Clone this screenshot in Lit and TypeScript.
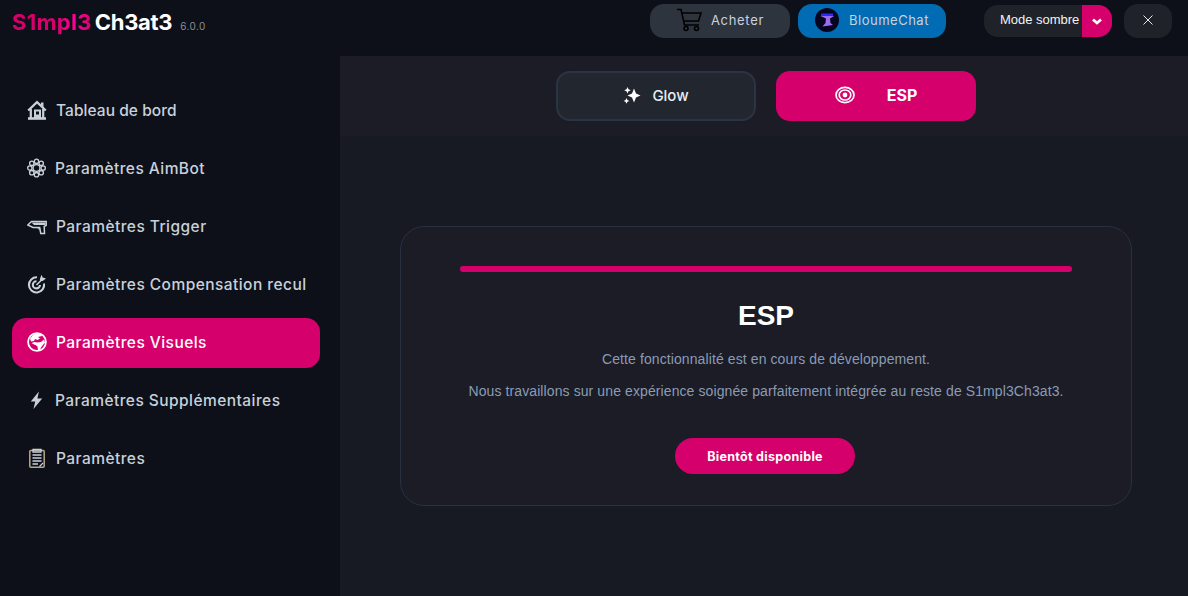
import { LitElement, html, css, svg } from 'lit';
import { customElement } from 'lit/decorators.js';

// eight petals around the hub of the AimBot icon
const petals = [0, 45, 90, 135, 180, 225, 270, 315].map((deg) => {
  const rad = (deg * Math.PI) / 180;
  return svg`<circle cx=${10 + 7 * Math.cos(rad)} cy=${10 + 7 * Math.sin(rad)} r="2.300"/>`;
});

const navItems = [
  {
    label: 'Tableau de bord',
    size: 20,
    tight: true,
    icon: svg`<path d="M1.200 10.500 10 2.200l8.800 8.300" fill="none" stroke="currentColor" stroke-width="2.300"/><path d="M14 5.500V2.500h2.500v5" fill="currentColor"/><path d="M3.800 9v9M16.200 9v9" stroke="currentColor" stroke-width="2.200"/><path d="M1 18.500h18" stroke="currentColor" stroke-width="2.600"/><path d="M7 9.500h7V18H7z" fill="currentColor"/><rect x="9" y="11.500" width="3" height="3" fill="#0d1018"/>`,
  },
  {
    label: 'Paramètres AimBot',
    size: 19,
    icon: svg`<g fill="none" stroke="currentColor" stroke-width="1.400"><circle cx="10" cy="10" r="3.600"/>${petals}</g>`,
  },
  {
    label: 'Paramètres Trigger',
    size: 20,
    icon: svg`<path d="M.8 9 4.500 5.500h14.700v3.800l-2 1.200 .3 7h-3.700l-1.200-6H6z" fill="none" stroke="currentColor" stroke-width="1.500"/><path d="M4.500 6.500h14V9H7z" fill="currentColor"/><path d="M10 11h3l.6 2.500h-2.600z" fill="currentColor" opacity=".6"/>`,
  },
  {
    label: 'Paramètres Compensation recul',
    size: 20,
    icon: svg`<g fill="none" stroke="currentColor" stroke-width="2.100"><path d="M17 9.500a7.600 7.600 0 1 1-7-6.200"/><path d="M13 11a3.600 3.600 0 1 1-3.500-3.800"/></g><path d="m9.500 11 5-5" stroke="currentColor" stroke-width="1.600"/><path d="M12.800 5.200 14.500.8l1.200 2.700 3.300 1-3.300 2.500h-2.200z" fill="currentColor"/>`,
  },
  {
    label: 'Paramètres Visuels',
    size: 20,
    active: true,
    icon: svg`<circle cx="10" cy="10" r="8.900" fill="none" stroke="currentColor" stroke-width="1.800"/><path d="M3 6.500 6.500 2.500l4-1.500 3.500 1 1 2-4 1 2 1.500-2.500 1.500-2.500-1-1 2-3 .5zM4.500 11l3-1 3 .5 3.500-.5 3-2.500 1 3-2.500 3-1.500 2-1 2.500-2 .5-.5-4-2-1.500-1.500-.5z" fill="currentColor"/>`,
  },
  {
    label: 'Paramètres Supplémentaires',
    size: 19,
    icon: svg`<path d="M12.500 1 4 11.500h4.700L6.800 19.500 16 8.500h-5z" fill="currentColor"/>`,
  },
  {
    label: 'Paramètres',
    size: 20,
    icon: svg`<rect x="2.800" y="2.500" width="14.400" height="16.700" rx="1" fill="none" stroke="#b9a68f" stroke-width="1.500"/><path d="M6 1.500h8v2.500H6zM5.500 7h9M5.500 10h9M5.500 13h9M5.500 16h5.500" stroke="currentColor" stroke-width="1.300" fill="none"/><path d="m12.500 18.500 3.500-3.500" stroke="currentColor" stroke-width="1.200"/>`,
  },
];

@customElement('app-root')
export class AppRoot extends LitElement {
  static styles = css`
    :host {
      display: grid;
      grid-template-columns: 340px 1fr;
      grid-template-rows: 56px 1fr;
      width: 1188px;
      height: 596px;
      overflow: hidden;
      background: #171a23;
      font-family: 'Inter', 'Liberation Sans', sans-serif;
      color: #fff;
    }

    .topbar {
      grid-column: 1 / 3;
      display: flex;
      align-items: flex-start;
      background: #0d1018;
      padding: 4px 16px 0 12px;
    }

    .logo {
      display: flex;
      align-items: baseline;
      gap: 3px;
      margin-top: 4px;
      font-size: 22px;
      font-weight: 700;
      line-height: 28px;
      letter-spacing: -0.3px;
    }

    .logo .pink {
      letter-spacing: 0.3px;
      background: linear-gradient(90deg, #d6006c 0%, #d6006c 55%, #ff0099 80%, #d6006c 100%);
      -webkit-background-clip: text;
      background-clip: text;
      color: transparent;
    }

    .version {
      margin-left: 5px;
      font-size: 10px;
      font-weight: 400;
      color: #8a8d94;
      letter-spacing: 0.4px;
    }

    .pill {
      display: flex;
      align-items: center;
      justify-content: center;
      gap: 9px;
      box-sizing: border-box;
      height: 34px;
      padding-bottom: 2px;
      border-radius: 14px;
      font-size: 13px;
      letter-spacing: 0.5px;
      color: #c9d1dc;
    }

    .buy {
      width: 140px;
      margin-left: auto;
      background: #2e343d;
      letter-spacing: 0.7px;
    }

    .chat {
      width: 148px;
      margin-left: 8px;
      background: #016cb3;
      gap: 10px;
    }

    .theme {
      display: flex;
      align-items: center;
      width: 128px;
      height: 32px;
      margin: 1px 0 0 38px;
      border-radius: 14px;
      overflow: hidden;
      background: #1f2229;
      font-family: 'Liberation Sans', sans-serif;
      font-size: 13px;
      letter-spacing: -0.02px;
      color: #f2f2f2;
    }

    .theme span {
      flex: 1;
      padding: 0 0 3px 16px;
      white-space: nowrap;
    }

    .theme i {
      display: flex;
      align-items: center;
      justify-content: center;
      width: 30px;
      height: 100%;
      background: #d6006c;
    }

    .close {
      display: flex;
      align-items: center;
      justify-content: center;
      box-sizing: border-box;
      width: 48px;
      height: 34px;
      margin-left: 12px;
      padding-bottom: 2px;
      border-radius: 14px;
      background: #1f2229;
    }

    .sidebar {
      display: flex;
      flex-direction: column;
      gap: 8px;
      padding: 30px 20px 0 12px;
      background: #0d1018;
    }

    .nav-item {
      display: flex;
      align-items: center;
      gap: 9px;
      box-sizing: border-box;
      height: 50px;
      padding: 0 0 2px 15px;
      border-radius: 14px;
      font-size: 15.500px;
      font-weight: 500;
      letter-spacing: 0.45px;
      color: #c8d0da;
      white-space: nowrap;
    }

    .nav-item.tight {
      letter-spacing: 0.05px;
    }

    .nav-item.active {
      background: #d6006c;
      color: #fff;
    }

    .content {
      display: flex;
      flex-direction: column;
    }

    .tabs {
      display: flex;
      justify-content: center;
      gap: 20px;
      height: 80px;
      padding: 15px 0 0 4px;
      box-sizing: border-box;
      background: #1b1c25;
    }

    .tab {
      display: flex;
      align-items: center;
      justify-content: center;
      box-sizing: border-box;
      width: 200px;
      height: 50px;
      padding-bottom: 2px;
      border-radius: 14px;
      font-size: 15px;
      font-weight: 500;
    }

    .tab.glow {
      gap: 11px;
      border: 2px solid #2a3444;
      background: #21262f;
      color: #e8edf4;
    }

    .tab.esp {
      gap: 32px;
      background: #d6006c;
      font-size: 16px;
      font-weight: 700;
    }

    .stage {
      padding: 90px 56px 0 60px;
    }

    .card {
      display: flex;
      flex-direction: column;
      align-items: center;
      box-sizing: border-box;
      height: 280px;
      padding: 39px 59px 0;
      border: 1px solid #2a3040;
      border-radius: 24px;
      background: #1b1c25;
      font-family: 'Liberation Sans', sans-serif;
    }

    .bar {
      align-self: stretch;
      height: 6px;
      border-radius: 3px;
      background: #d6006c;
    }

    h1 {
      margin: 27px 0 0;
      font-size: 28px;
      line-height: 34px;
      font-weight: 700;
    }

    p {
      margin: 16px 0 0;
      font-size: 14px;
      line-height: 16px;
      letter-spacing: 0.1px;
      color: #8a9bb5;
    }

    h1 + p {
      margin-top: 18px;
    }

    .soon {
      display: flex;
      align-items: center;
      justify-content: center;
      width: 180px;
      height: 36px;
      margin: 39px 2px 0 0;
      border-radius: 18px;
      background: #d6006c;
      font-family: 'Inter', 'Liberation Sans', sans-serif;
      font-size: 12.500px;
      font-weight: 700;
      letter-spacing: 0.3px;
    }
  `;

  render() {
    return html`
      <header class="topbar">
        <div class="logo">
          <span class="pink">S1mpl3</span><span>Ch3at3</span>
          <span class="version">6.0.0</span>
        </div>
        <div class="pill buy">
          <svg width="26" height="24" viewBox="0 0 26 24" fill="none" stroke="#000" stroke-width="1.600">
            <path d="M1 1.500h4l3.500 15.500H23" />
            <path d="M6 5h19l-2.500 8H8" />
            <circle cx="10" cy="20.500" r="2" />
            <circle cx="20.500" cy="20.500" r="2" />
          </svg>
          <span>Acheter</span>
        </div>
        <div class="pill chat">
          <svg width="24" height="24" viewBox="0 0 24 24">
            <circle cx="12" cy="12" r="12" fill="#05051f" />
            <path d="M6 5.500h12v2.500H6z" fill="#2a2cf0" />
            <path d="M5.500 8h13.500l-4 2.500.5 4.500 2.500 2-10.500 1.500 3-3.500.5-4.500z" fill="#9a6cf0" />
          </svg>
          <span>BloumeChat</span>
        </div>
        <div class="theme">
          <span>Mode sombre</span>
          <i>
            <svg width="10" height="7" viewBox="0 0 10 7" fill="none" stroke="#fff" stroke-width="2.800">
              <path d="M1 1.500 5 5l4-3.500" />
            </svg>
          </i>
        </div>
        <div class="close">
          <svg width="10" height="10" viewBox="0 0 10 10" stroke="#e8e8e8" stroke-width="1">
            <path d="M.5.500l9 9M9.500.500l-9 9" />
          </svg>
        </div>
      </header>

      <nav class="sidebar">
        ${navItems.map(
          (item) => html`
            <div class="nav-item ${item.active ? 'active' : ''} ${item.tight ? 'tight' : ''}">
              <svg width=${item.size} height="20" viewBox="0 0 20 20">${item.icon}</svg>
              <span>${item.label}</span>
            </div>
          `
        )}
      </nav>

      <main class="content">
        <div class="tabs">
          <div class="tab glow">
            <svg width="18" height="18" viewBox="0 0 18 18" fill="#fff">
              <path d="M11 2.500 13 7.500l4.500 2-4.500 2L11 16.500l-2-5-4.500-2 4.500-2z" />
              <path d="M4.500 1l1 2.300 2.300 1-2.300 1-1 2.300-1-2.300-2.300-1 2.300-1zM3.500 12l.9 2 2 .9-2 .9-.9 2-.9-2-2-.9 2-.9z" />
            </svg>
            <span>Glow</span>
          </div>
          <div class="tab esp">
            <svg width="20" height="18" viewBox="0 0 20 18" fill="none" stroke="#fff" stroke-width="1.700">
              <ellipse cx="10" cy="9" rx="9" ry="7.600" />
              <ellipse cx="10" cy="9" rx="5.800" ry="5" />
              <circle cx="10" cy="9" r="2.400" fill="#fff" stroke="none" />
            </svg>
            <span>ESP</span>
          </div>
        </div>
        <div class="stage">
          <section class="card">
            <div class="bar"></div>
            <h1>ESP</h1>
            <p>Cette fonctionnalité est en cours de développement.</p>
            <p>Nous travaillons sur une expérience soignée parfaitement intégrée au reste de S1mpl3Ch3at3.</p>
            <div class="soon">Bientôt disponible</div>
          </section>
        </div>
      </main>
    `;
  }
}
